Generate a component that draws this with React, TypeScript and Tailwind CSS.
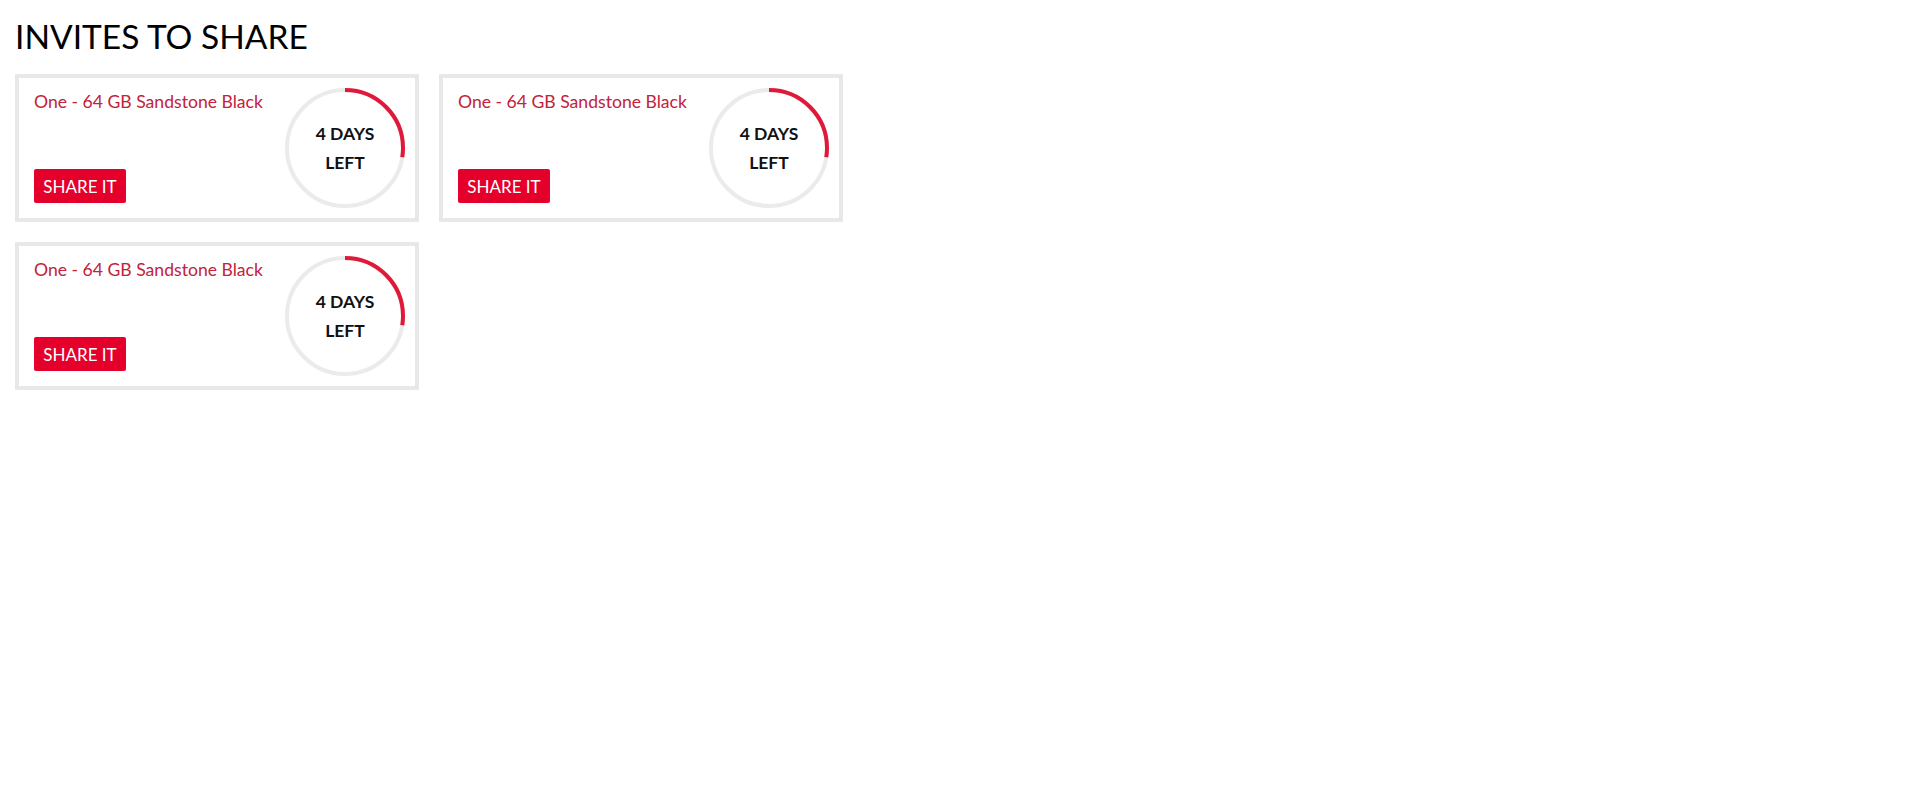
import React from 'react';

type Invite = {
  id: number;
  product: string;
  daysLeft: number;
  progress: number; // share of the ring drawn in red
};

const invites: Invite[] = [
  { id: 1, product: 'One - 64 GB Sandstone Black', daysLeft: 4, progress: 0.275 },
  { id: 2, product: 'One - 64 GB Sandstone Black', daysLeft: 4, progress: 0.275 },
  { id: 3, product: 'One - 64 GB Sandstone Black', daysLeft: 4, progress: 0.275 },
];

function DaysRing({ days, progress }: { days: number; progress: number }) {
  const r = 58;
  const c = 2 * Math.PI * r;
  return (
    <div className="relative w-[120px] h-[120px] shrink-0">
      <svg width="120" height="120" viewBox="0 0 120 120" className="absolute inset-0">
        <circle cx="60" cy="60" r={r} fill="none" stroke="#ebebeb" strokeWidth="4" />
        <circle
          cx="60"
          cy="60"
          r={r}
          fill="none"
          stroke="#e0183a"
          strokeWidth="4"
          strokeDasharray={`${c * progress} ${c}`}
          transform="rotate(-90 60 60)"
        />
      </svg>
      <div className="absolute inset-0 flex flex-col items-center justify-center text-[17.5px] font-bold leading-[29px] text-[#111]">
        <span>{days} DAYS</span>
        <span>LEFT</span>
      </div>
    </div>
  );
}

function InviteCard({ invite }: { invite: Invite }) {
  return (
    <div className="h-[148px] border-4 border-[#e8e8e8] bg-white flex items-center justify-between pr-[10px]">
      <div className="h-full flex flex-col justify-between items-start pl-[15px] pt-[13px] pb-[15px]">
        <span className="text-[17.6px] leading-[22px] text-[#c2223b]">{invite.product}</span>
        <button className="w-[92px] h-[34px] rounded-[2px] bg-[#e4002b] text-white text-[17px] leading-none flex items-center justify-center">
          SHARE IT
        </button>
      </div>
      <DaysRing days={invite.daysLeft} progress={invite.progress} />
    </div>
  );
}

export default function App() {
  return (
    <div className="min-h-screen bg-white px-[15px] pt-[16px] font-['Lato',sans-serif]">
      <h1 className="text-[33.5px] leading-[40px] font-normal text-black mb-[18px]">INVITES TO SHARE</h1>
      <div className="grid grid-cols-[404px_404px] gap-5">
        {invites.map((inv) => (
          <InviteCard key={inv.id} invite={inv} />
        ))}
      </div>
    </div>
  );
}
